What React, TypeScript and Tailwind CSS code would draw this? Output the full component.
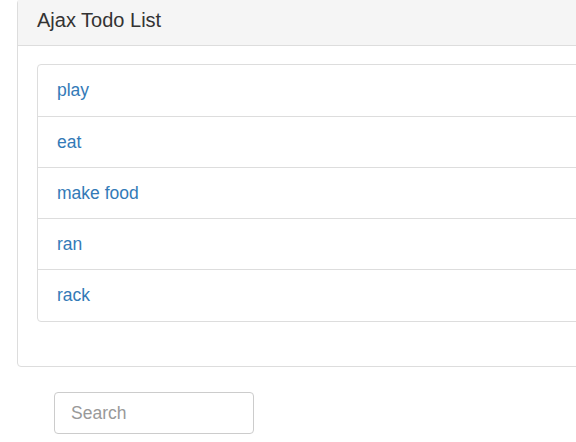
const todos = ["play", "eat", "make food", "ran", "rack"];

export default function App() {
  return (
    <div
      className="w-[576px] h-[442px] overflow-hidden bg-white"
      style={{ fontFamily: '"Liberation Sans", Arial, sans-serif' }}
    >
      {/* Panel */}
      <div className="ml-[17px] -mt-px w-[640px] border border-[#dddddd] rounded-[4px] bg-white">
        <div className="bg-[#f5f5f5] border-b border-[#dddddd] pl-[19px] pt-[9px] pb-[13px]">
          <h3 className="text-[20px] leading-[23px] text-[#333333]">Ajax Todo List</h3>
        </div>
        <div className="pl-[19px] pt-[18px] pb-[44px]">
          <ul className="border border-[#dddddd] rounded-[4px]">
            {todos.map((todo, i) => (
              <li
                key={todo}
                className={`px-[19px] pt-[12px] text-[17.5px] leading-[26px] ${
                  i === 0 || i === todos.length - 1 ? "pb-[13px]" : "pb-[12px]"
                } ${i < todos.length - 1 ? "border-b border-[#dddddd]" : ""}`}
              >
                <a href="#" className="text-[#337ab7]">
                  {todo}
                </a>
              </li>
            ))}
          </ul>
        </div>
      </div>

      {/* Search */}
      <div className="pl-[54px] pt-[25px]">
        <input
          type="text"
          placeholder="Search"
          className="w-[200px] h-[42px] border border-[#cccccc] rounded-[4px] pl-4 text-[17.5px] text-[#555555] placeholder:text-[#999999] outline-none"
        />
      </div>
    </div>
  );
}
